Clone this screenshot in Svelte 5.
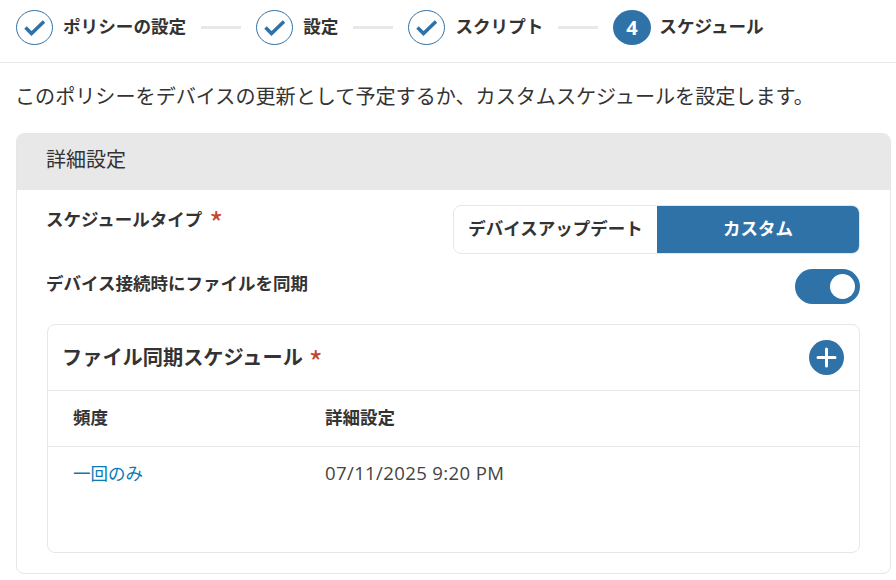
<script>
  const steps = [
    { label: 'ポリシーの設定', done: true },
    { label: '設定', done: true },
    { label: 'スクリプト', done: true },
    { label: 'スケジュール', done: false, num: 4 },
  ];
  const rows = [{ freq: '一回のみ', detail: '07/11/2025 9:20 PM' }];
</script>

<div class="page">
  <!-- Stepper -->
  <div class="stepper">
    {#each steps as step, i}
      {#if step.done}
        <svg class="circle" viewBox="0 0 37 35" width="37" height="35">
          <ellipse cx="18.5" cy="17.5" rx="18" ry="17" fill="#fff" stroke="#2f72a8" stroke-width="1" />
          <path d="M9.5 17.5 L15.5 23.5 L28 11.5" fill="none" stroke="#2f72a8" stroke-width="3.6" />
        </svg>
      {:else}
        <span class="num">{step.num}</span>
      {/if}
      <span class="step-label">{step.label}</span>
      {#if i < steps.length - 1}
        <span class="line"></span>
      {/if}
    {/each}
  </div>

  <p class="intro">このポリシーをデバイスの更新として予定するか、カスタムスケジュールを設定します。</p>

  <section class="panel">
    <header class="panel-head">詳細設定</header>
    <div class="panel-body">
      <div class="field type-field">
        <span class="label">スケジュールタイプ<em>*</em></span>
        <div class="segment">
          <span class="seg">デバイスアップデート</span>
          <span class="seg on">カスタム</span>
        </div>
      </div>

      <div class="field sync-field">
        <span class="label">デバイス接続時にファイルを同期</span>
        <span class="toggle"><span class="knob"></span></span>
      </div>

      <div class="card">
        <div class="card-head">
          <h3>ファイル同期スケジュール<em>*</em></h3>
          <svg class="add" viewBox="0 0 35 35" width="35" height="35">
            <circle cx="17.5" cy="17.5" r="17.5" fill="#2f72a8" />
            <path d="M17.5 9 V26 M9 17.5 H26" stroke="#fff" stroke-width="3" stroke-linecap="round" />
          </svg>
        </div>
        <div class="row thead">
          <span class="col-a">頻度</span>
          <span>詳細設定</span>
        </div>
        {#each rows as row}
          <div class="row body-row">
            <a class="col-a link" href="#freq">{row.freq}</a>
            <span class="detail">{row.detail}</span>
          </div>
        {/each}
      </div>
    </div>
  </section>
</div>

<style>
  :global(body) {
    margin: 0;
    background: #fff;
  }

  .page {
    width: 896px;
    height: 580px;
    overflow: hidden;
    font-family: "Noto Sans CJK JP", "Noto Sans", sans-serif;
    color: #333;
  }

  /* Stepper */
  .stepper {
    height: 63px;
    box-sizing: border-box;
    padding: 10px 0 0 16px;
    display: flex;
    align-items: flex-start;
    border-bottom: 1px solid #e8e8e8;
  }

  .circle {
    flex-shrink: 0;
  }

  .num {
    width: 38px;
    height: 35px;
    padding-right: 1px;
    box-sizing: border-box;
    border-radius: 50%;
    background: #2f72a8;
    color: #fff;
    font: bold 20px/35px "Open Sans", sans-serif;
    text-align: center;
    flex-shrink: 0;
  }

  .step-label {
    margin-left: 10px;
    font-size: 17.6px;
    font-weight: 700;
    line-height: 32px;
    white-space: nowrap;
  }

  .num + .step-label {
    margin-left: 8px;
  }

  .line {
    width: 40px;
    height: 3px;
    margin: 16px 15px 0;
    background: #e8e8e8;
  }

  .intro {
    margin: 0;
    padding: 18px 0 0 15px;
    font-size: 20.1px;
    line-height: 30px;
    white-space: nowrap;
  }

  /* Panel */
  .panel {
    margin: 22px 5px 0 16px;
    height: 441px;
    box-sizing: border-box;
    border: 1px solid #e6e6e6;
    border-radius: 8px;
    overflow: hidden;
  }

  .panel-head {
    height: 56px;
    padding-left: 29px;
    background: #e8e8e8;
    font-size: 20px;
    line-height: 50px;
  }

  .panel-body {
    padding: 15px 30px 0;
  }

  .field {
    display: flex;
    justify-content: space-between;
    align-items: flex-start;
  }

  .type-field {
    height: 64px;
  }

  .sync-field {
    height: 55px;
  }

  .label {
    margin: 1px 0 0 -1px;
    font-size: 17.5px;
    font-weight: 700;
    line-height: 26px;
  }

  em {
    margin-left: 7px;
    color: #c8452f;
    font-size: 30px;
    font-style: normal;
    font-weight: 400;
    line-height: 0;
    vertical-align: -9px;
  }

  .segment {
    display: flex;
    width: 407px;
    height: 49px;
    box-sizing: border-box;
    border: 1px solid #e6e6e6;
    border-radius: 8px;
    overflow: hidden;
  }

  .seg {
    width: 203px;
    text-align: center;
    font-size: 17.5px;
    font-weight: 700;
    line-height: 44px;
  }

  .seg.on {
    flex: 1;
    background: #2f72a8;
    color: #fff;
  }

  .toggle {
    width: 65px;
    height: 35px;
    border-radius: 18px;
    background: #2f72a8;
    position: relative;
  }

  .knob {
    position: absolute;
    top: 5px;
    right: 5px;
    width: 25px;
    height: 25px;
    border-radius: 50%;
    background: #fff;
  }

  /* Schedule card */
  .card {
    height: 229px;
    box-sizing: border-box;
    border: 1px solid #e6e6e6;
    border-radius: 8px;
  }

  .card-head {
    height: 65px;
    padding: 0 15px 0 14px;
    display: flex;
    justify-content: space-between;
    align-items: center;
    border-bottom: 1px solid #e6e6e6;
  }

  h3 {
    margin: 0 0 3px;
    font-size: 20.2px;
    font-weight: 700;
  }

  h3 em {
    margin-left: 6px;
  }

  .row {
    display: flex;
    height: 55px;
    padding-left: 25px;
    align-items: center;
    font-size: 17.5px;
  }

  .thead {
    height: 56px;
    padding-bottom: 4px;
    box-sizing: border-box;
    font-weight: 700;
    border-bottom: 1px solid #e6e6e6;
  }

  .body-row {
    padding-bottom: 4px;
    box-sizing: border-box;
  }

  .col-a {
    width: 252px;
  }

  .link {
    color: #0a7ab5;
    text-decoration: none;
  }

  .detail {
    font-family: "Open Sans", sans-serif;
    font-size: 18.6px;
    letter-spacing: 0.35px;
    color: #444;
  }
</style>
